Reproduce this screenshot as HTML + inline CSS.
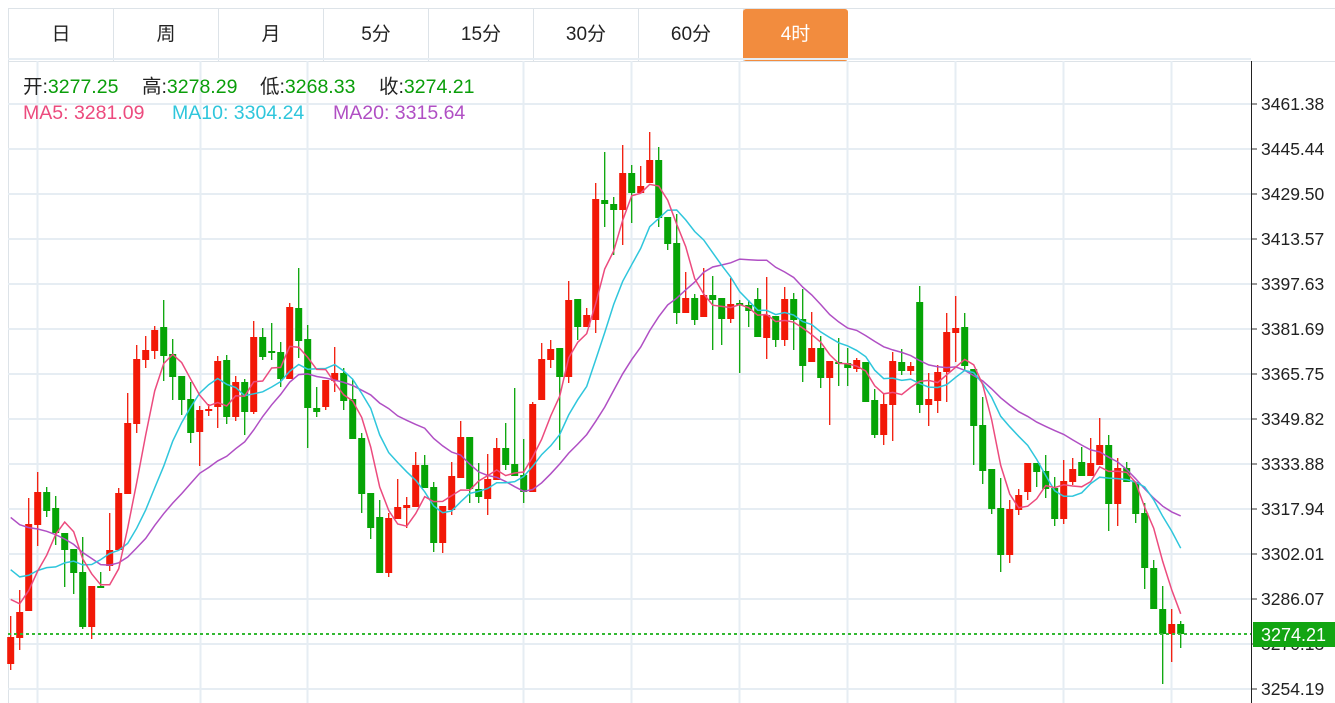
<!DOCTYPE html>
<html><head><meta charset="utf-8">
<style>
html,body{margin:0;padding:0;background:#fff;width:1335px;height:703px;overflow:hidden;font-family:"Liberation Sans","Noto Sans CJK SC",sans-serif;}
#tabs{position:absolute;left:8px;top:8px;width:1327px;height:52px;border-top:1px solid #dde3e8;border-bottom:1px solid #dde3e8;border-left:1px solid #dde3e8;}
.tab{position:absolute;top:0;height:52px;width:104px;border-right:1px solid #dde3e8;text-align:center;line-height:52px;font-size:19px;color:#222;}
.tab.on{background:#f28c3e;color:#fff;border-radius:3px;border-right:none;}
svg{position:absolute;left:0;top:0;}
</style></head><body>
<div id="tabs">
<div class="tab" style="left:0">日</div>
<div class="tab" style="left:105px">周</div>
<div class="tab" style="left:210px">月</div>
<div class="tab" style="left:315px">5分</div>
<div class="tab" style="left:420px">15分</div>
<div class="tab" style="left:525px">30分</div>
<div class="tab" style="left:630px">60分</div>
<div class="tab on" style="left:734px;width:105px">4时</div>
</div>
<svg id="c" width="1335" height="703" xmlns="http://www.w3.org/2000/svg"></svg>
<script>
var s=document.getElementById('c');var h='';
h+='<line x1="8.5" y1="61" x2="8.5" y2="703" stroke="#dde3e8"/>';
[37,200,307,523,631,739,847,955,1063,1171].forEach(function(x){h+='<line x1="'+(x+.5)+'" y1="61" x2="'+(x+.5)+'" y2="703" stroke="#e6edf3" stroke-width="2"/>';});
var labs=["3461.38","3445.44","3429.50","3413.57","3397.63","3381.69","3365.75","3349.82","3333.88","3317.94","3302.01","3286.07","3270.13","3254.19"];
for(var k=0;k<14;k++){var y=104+45*k;h+='<line x1="8" y1="'+y+'" x2="1251" y2="'+y+'" stroke="#e6edf3" stroke-width="2"/>';
h+='<line x1="1251" y1="'+y+'" x2="1257" y2="'+y+'" stroke="#333"/>';
h+='<text x="1261" y="'+(y+6)+'" font-size="17.5" fill="#222" font-family="Liberation Sans">'+labs[k]+'</text>';}
h+='<line x1="8" y1="59" x2="1251" y2="59" stroke="#e6edf3" stroke-width="2"/>';
h+='<line x1="1251.5" y1="61" x2="1251.5" y2="703" stroke="#222"/>';
var C=[[664,637,616,670],[638,612,590,650],[611,524,498,611],[525,492,472,546],[492,511,487,517],[508,533,496,545],[533,550,533,587],[549,573,549,594],[572,627,537,629],[627,586,586,639],[586,588,572,588],[566,550,513,571],[550,493,488,550],[494,423,393,494],[424,359,345,433],[360,350,336,368],[351,330,326,359],[327,356,300,381],[354,377,339,400],[376,400,376,415],[399,433,382,443],[432,410,406,466],[410,409,404,416],[407,361,356,428],[360,417,355,424],[417,382,376,421],[382,412,379,435],[412,337,321,414],[337,357,328,360],[351,352,323,360],[352,379,342,387],[379,307,303,379],[308,341,268,358],[339,408,325,448],[408,412,387,417],[407,380,380,410],[381,373,347,392],[373,401,368,410],[399,439,379,439],[438,494,433,513],[493,528,493,539],[517,573,500,573],[573,518,513,577],[519,507,479,519],[508,505,497,528],[507,465,452,507],[465,488,455,488],[487,543,482,552],[543,506,506,553],[510,476,462,515],[478,437,421,478],[437,489,437,503],[489,497,463,503],[499,479,454,515],[480,448,438,480],[448,465,423,470],[464,476,388,476],[475,492,439,503],[492,404,402,492],[400,359,343,400],[360,349,340,368],[348,377,348,450],[377,300,281,383],[299,327,299,340],[327,315,308,327],[320,199,183,333],[200,204,152,227],[204,210,197,255],[210,173,145,245],[173,193,165,223],[193,186,166,193],[183,160,132,183],[160,218,147,227],[217,244,217,250],[243,313,214,324],[313,298,272,313],[298,320,294,325],[317,295,268,317],[295,300,276,350],[298,319,298,345],[319,304,278,323],[303,305,300,373],[305,311,300,327],[299,337,288,337],[338,315,277,359],[316,340,316,347],[340,299,287,346],[299,320,293,350],[319,366,289,382],[362,348,312,362],[348,378,336,388],[378,361,361,425],[362,364,338,386],[363,368,348,386],[369,360,358,372],[362,402,362,402],[400,435,389,438],[435,404,393,445],[405,361,352,441],[362,371,349,375],[371,366,362,375],[302,405,286,413],[405,399,373,426],[401,372,365,413],[372,332,313,402],[333,328,296,362],[327,366,313,370],[369,426,369,465],[425,471,397,484],[469,509,469,514],[508,555,478,572],[555,509,500,563],[510,495,489,515],[492,463,463,500],[463,472,463,487],[471,489,455,498],[488,519,477,526],[519,481,460,524],[482,469,458,485],[462,476,447,476],[476,463,438,476],[465,445,418,465],[445,504,435,531],[504,468,458,526],[468,482,462,482],[482,514,482,523],[513,568,503,589],[568,609,560,609],[609,634,586,684],[634,624,609,662],[624,634,621,648]];
var RED='#f21807',GRN='#06a406';
C.forEach(function(c,i){var x=10.7+i*9;var up=c[1]<c[0];var col=up?RED:GRN;var t=Math.min(c[0],c[1]),b=Math.max(c[0],c[1]);if(b-t<2){b=t+2;}
h+='<line x1="'+x.toFixed(1)+'" y1="'+c[2]+'" x2="'+x.toFixed(1)+'" y2="'+c[3]+'" stroke="'+col+'" stroke-width="1.3"/>';
h+='<rect x="'+(x-3.5).toFixed(1)+'" y="'+t+'" width="7" height="'+(b-t)+'" fill="'+col+'"/>';});
var cl=C.map(function(c){return c[1];});
var pre=[];for(var j=0;j<10;j++)pre.push(465);for(j=0;j<5;j++)pre.push(540);for(j=0;j<4;j++)pre.push(590);
var all=pre.concat(cl);
function ma(n,col){var p='';for(var i=0;i<cl.length;i++){var k=i+pre.length;var s2=0;for(var m=0;m<n;m++)s2+=all[k-m];var y=s2/n;p+=(i?'L':'M')+(10.7+i*9).toFixed(1)+','+y.toFixed(1);}h+='<path d="'+p+'" fill="none" stroke="'+col+'" stroke-width="1.5"/>';}
ma(20,'#b04fc4');ma(10,'#2fc6dc');ma(5,'#ec4b7e');
h+='<line x1="8" y1="634" x2="1251" y2="634" stroke="#33b833" stroke-width="2" stroke-dasharray="3,3"/>';
h+='<rect x="1253" y="622" width="82" height="25" fill="#12a512"/>';
h+='<text x="1261" y="641" font-size="18" fill="#fff" font-family="Liberation Sans">3274.21</text>';
var F='font-family="Liberation Sans,Noto Sans CJK SC,sans-serif" font-size="19.5"';
function t(x,y,lab,val,c1,c2){return '<text x="'+x+'" y="'+y+'" '+F+' fill="'+c1+'">'+lab+'<tspan fill="'+c2+'">'+val+'</tspan></text>';}
var G='#0a9e0a';
h+=t(23,93,'开:','3277.25','#222',G)+t(142,93,'高:','3278.29','#222',G)+t(260,93,'低:','3268.33','#222',G)+t(379,93,'收:','3274.21','#222',G);
h+=t(23,119,'MA5: ','3281.09','#ec4b7e','#ec4b7e')+t(172,119,'MA10: ','3304.24','#2fc6dc','#2fc6dc')+t(333,119,'MA20: ','3315.64','#b04fc4','#b04fc4');
s.innerHTML=h;
</script>
</body></html>
